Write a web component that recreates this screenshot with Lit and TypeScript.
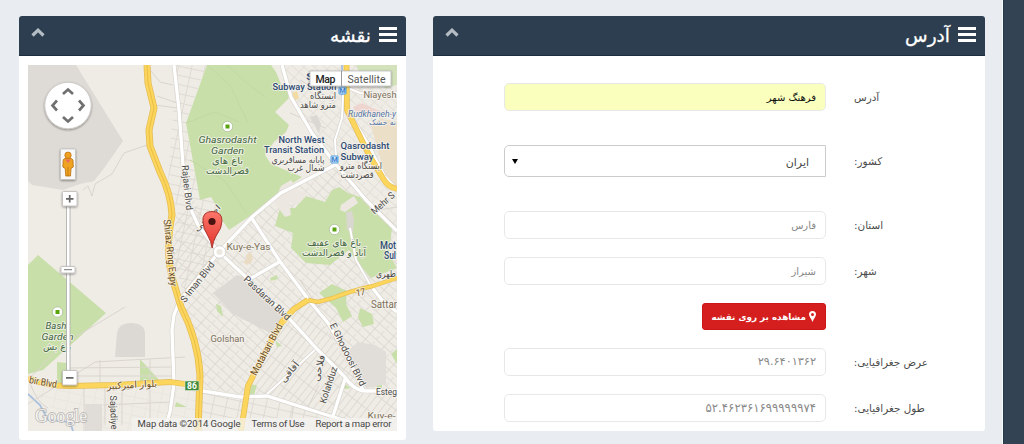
import { LitElement, html, svg, css } from "lit";
import { customElement } from "lit/decorators.js";

type Label = {
  x: number; y: number; s: string; w: number; size?: number; fill?: string;
  r?: number; italic?: boolean; bold?: boolean; fa?: boolean;
};

const BLUE = "#2d4a74";
const GREEN = "#42653f";
const TAN = "#7d705a";
const ROAD = "#6b4a1c";
const INK = "#4c4a47";

const labels: Label[] = [
  { x: 329, y: 80, s: "Shahed", w: 46, fill: BLUE, bold: true },
  { x: 304.5, y: 90, s: "Subway Station", w: 64, fill: BLUE, bold: true },
  { x: 323, y: 99, s: "ایستگاه", w: 26, fa: true },
  { x: 318, y: 108, s: "مترو شاهد", w: 36, fa: true },
  { x: 380, y: 98, s: "Niayesh", w: 33, fill: TAN },
  { x: 372, y: 117, s: "Rudkhaneh-y", w: 48, fill: "#5877a5", italic: true, size: 9 },
  { x: 382.5, y: 125, s: "نه خشک", w: 27, fill: "#5877a5", fa: true, size: 8 },
  { x: 227.5, y: 142.5, s: "Ghasrodasht", w: 58, fill: GREEN, italic: true },
  { x: 227.5, y: 153.5, s: "Garden", w: 33, fill: GREEN, italic: true },
  { x: 227.5, y: 164, s: "باغ های", w: 31, fill: GREEN, fa: true },
  { x: 227.5, y: 174, s: "قصرالدشت", w: 43, fill: GREEN, fa: true },
  { x: 301.5, y: 142.5, s: "North West", w: 46, fill: BLUE, bold: true },
  { x: 294, y: 153, s: "Transit Station", w: 60, fill: BLUE, bold: true },
  { x: 298, y: 162.5, s: "پایانه مسافربری", w: 53, fa: true },
  { x: 306, y: 171, s: "شمال غرب", w: 37, fa: true },
  { x: 365, y: 149, s: "Qasrodasht", w: 49, fill: BLUE, bold: true },
  { x: 357, y: 159.5, s: "Subway", w: 33, fill: BLUE, bold: true },
  { x: 361, y: 169, s: "ایستگاه مترو", w: 42, fa: true },
  { x: 357, y: 178, s: "قصردشت", w: 33, fa: true },
  { x: 385, y: 205.5, s: "Mehr S", w: 28, r: -42, size: 9.5 },
  { x: 184, y: 188, s: "Rajaei Blvd", w: 45, r: 84 },
  { x: 167, y: 253, s: "Shiraz Ring Expy", w: 67, r: 84, fill: ROAD, size: 10 },
  { x: 209, y: 220, s: "اصلاحی", w: 34, r: -45, fa: true, size: 8 },
  { x: 200, y: 284, s: "S Iman Blvd", w: 49, r: -52 },
  { x: 248.5, y: 250, s: "Kuy-e-Yas", w: 44, fill: TAN },
  { x: 265, y: 300.5, s: "Pasdaran Blvd", w: 60, r: 43 },
  { x: 334, y: 245.5, s: "باغ های عفیف", w: 54, fill: GREEN, fa: true },
  { x: 334, y: 255.5, s: "آباد و قصرالدشت", w: 64, fill: GREEN, fa: true },
  { x: 388, y: 248.5, s: "Mot", w: 16, fill: BLUE, bold: true, size: 10 },
  { x: 390, y: 258.5, s: "Sul", w: 12, fill: BLUE, bold: true, size: 10 },
  { x: 386, y: 277, s: "طهری", w: 20, fa: true },
  { x: 361, y: 295.5, s: "17", w: 9, fill: ROAD, r: -8 },
  { x: 384, y: 308, s: "Sattar", w: 26, fill: TAN, size: 10 },
  { x: 227.5, y: 342, s: "Golshan", w: 34, fill: TAN },
  { x: 269.5, y: 351, s: "Motahari Blvd", w: 57, r: -62, fill: ROAD, size: 10 },
  { x: 345, y: 356, s: "E Ghodoosi Blvd", w: 69, r: 63.5 },
  { x: 292, y: 374, s: "آفاقی", w: 24, r: -50, fa: true },
  { x: 322, y: 369, s: "فلاحی", w: 27, r: -76, fa: true },
  { x: 331.5, y: 386, s: "Kolahduz", w: 38, r: -72 },
  { x: 386.5, y: 395, s: "Esteg", w: 21, size: 9.5 },
  { x: 381.5, y: 419, s: "Kuy-e-", w: 28, fill: TAN },
  { x: 56, y: 329, s: "Bash", w: 21, fill: GREEN, italic: true },
  { x: 57.5, y: 340, s: "Garden", w: 32, fill: GREEN, italic: true },
  { x: 57, y: 350, s: "باغ بش", w: 28, fill: GREEN, fa: true },
  { x: 42.5, y: 385.5, s: "bir Blvd", w: 28, r: 10, fill: ROAD, size: 10 },
  { x: 132, y: 388, s: "بلوار امیرکبیر", w: 50, r: -3, fill: ROAD, fa: true },
  { x: 110.500, y: 412.500, s: "Sajadiye", w: 34, r: 88 },
];

const white = [
  "M174 65L179 110L183 165L187 201L198 225L219 252",
  "M219 252L252 217L281 193L335 165",
  "M219 252L246 277L285 314L318 350L344 376Q354 391 366 391L397 391",
  "M251 217L279 260L308 299L328 323L345 352L363 390",
  "M282 65L291 97L312 133L333 161L366 200L397 231",
  "M246 281L281 261",
  "M219 252L180 300L174 315L172 330L174 384L170 412L164 431",
  "M203 391L240 397L267 396L330 416L380 431",
  "M345 379L333 416",
  "M371 286L382 300L397 312",
  "M347 110L368 144L384 176L397 190",
];

const minor = [
  "M265 396L317 348", "M336 156L335 140L342 118L343 95",
  "M350 228L356 260L371 286", "M397 93L375 95L360 93L348 88",
];

const thin = [
  "M28 380L62 345L125 307", "M28 404L95 362L130 360L185 357",
  "M100 360L100 385", "M66 368L175 367", "M66 376L175 376", "M84 386L84 431",
  "M122 388L122 425", "M103 405L172 402", "M150 359L150 418", "M105 386L105 425",
  "M83 190L88 186L92 196L95 184L112 174L124 153L150 144", "M150 70L160 82L173 85",
  "M155 105L177 108", "M157 96L177 103", "M319 385L308 407", "M294 402L290 431",
  "M300 80L325 95", "M290 113L325 128", "M378 210L397 207",
  "M300 280L318 307L350 290", "M30 383Q37 403 48 408",
];

const goldPaths = [
  "M147 65L148 83L154 108L149 130L150 146L160 172Q171 194 172 215Q165 250 172 277L181 307Q198 340 200 375L198 431",
  "M346.500 65L347 110L369 155L384 180Q388 187 397 189",
  "M28 378Q45 386 70 386L115 385L170 382L199 386",
  "M308 300L294 309L282 322L270 343L248 386L241 431",
  "M397 278L373 286Q350 291 333 298L318 302L308 300",
];

@customElement("city-map")
export class CityMap extends LitElement {
  static styles = css`
    :host { display: block; }
    .canvas { display: block; width: 369px; height: 366px; }
    .lat { font-family: Roboto, sans-serif; }
    .fa { font-family: "DejaVu Sans", sans-serif; }
    .logo { font-family: "Liberation Serif", serif; }
  `;

  private label(l: Label) {
    const tr = `rotate(${l.r ?? 0} ${l.x} ${l.y})`;
    return svg`<text class=${l.fa ? "fa" : "lat"} x=${l.x} y=${l.y} transform=${tr}
      text-anchor="middle" font-size=${l.size ?? 9.5} font-weight=${l.bold ? 500 : 400}
      font-style=${l.italic ? "italic" : "normal"} fill=${l.fill ?? INK}
      stroke="#f7f5f0" stroke-opacity=".7" stroke-width="2" paint-order="stroke" stroke-linejoin="round"
      textLength=${l.w} lengthAdjust="spacingAndGlyphs">${l.s}</text>`;
  }

  private park(x: number, y: number) {
    return svg`<circle cx=${x} cy=${y} r="5.2" fill="#fff" stroke="#a9bd98" stroke-width=".8"/>
      <rect x=${x - 2} y=${y - 2} width="4" height="4" fill="#5aa411"/>`;
  }

  private metro(x: number, y: number) {
    return svg`<rect x=${x - 3.5} y=${y - 3.5} width="7" height="7" rx=".5" fill="#d9ebfb" stroke="#4a9be0"/>
      <text class="lat" x=${x} y=${y + 2.6} text-anchor="middle" font-size="7" font-weight="700" fill="#3a80cc">M</text>`;
  }

  render() {
    return html`<svg class="canvas" viewBox="28 65 369 366">
      <defs>
        <pattern id="g1" width="19" height="7" patternUnits="userSpaceOnUse" patternTransform="rotate(42)">
          <path d="M0 .5H19M4.500 0V7M13 3V7" stroke="#dbd6cf" stroke-width=".8" fill="none"/>
        </pattern>
        <pattern id="g2" width="17" height="6" patternUnits="userSpaceOnUse" patternTransform="rotate(-52)">
          <path d="M0 .5H17M5.500 0V6" stroke="#dbd6cf" stroke-width=".8" fill="none"/>
        </pattern>
        <pattern id="g3" width="13" height="9" patternUnits="userSpaceOnUse" patternTransform="rotate(12)">
          <path d="M0 .5H13M6.500 0V9" stroke="#dbd6cf" stroke-width=".8" fill="none"/>
        </pattern>
        <linearGradient id="pin" x1="0" y1="0" x2="0" y2="1">
          <stop offset="0" stop-color="#fc766b"/><stop offset="1" stop-color="#e3352c"/>
        </linearGradient>
        <filter id="sh" x="-20%" y="-20%" width="140%" height="150%">
          <feDropShadow dx="0" dy="1" stdDeviation="1" flood-opacity=".4"/>
        </filter>
      </defs>
      <rect x="28" y="65" width="369" height="366" fill="#efece6"/>
      <path d="M28 65H76L123 141L105 167L94 181L80 184L63 190L32 185L28 181Z" fill="#dedad5"/>
      <path d="M176 65H207L186 122L198 190L216 198L219 252L185 290L172 262L178 212L168 180Z" fill="url(#g3)"/>
      <path d="M219 252L185 295L172 262L176 215L195 200Z" fill="url(#g2)"/>
      <path d="M182 300L219 252L285 314L244 395L202 388L198 350Z" fill="url(#g1)"/>
      <path d="M202 390L265 396L380 430H200Z" fill="url(#g3)"/>
      <path d="M28 388H199V431H80Z" fill="url(#g3)" opacity=".35"/>
      <path d="M252 217L308 299L285 314L219 252Z" fill="url(#g1)"/>
      <path d="M285 314L308 300L363 389L397 391V431L248 393Z" fill="url(#g2)"/>
      <path d="M308 300L371 286L397 278V391H363Z" fill="url(#g1)"/>
      <path d="M283 65H397V231L366 200L333 161L291 102Z" fill="url(#g1)" opacity=".7"/>
      <path d="M252 217L333 163L397 231V278L308 299Z" fill="url(#g1)"/>
      <path d="M371 126L380 118L397 122V187L386 178Z" fill="#ecdfc8"/>
      <path d="M353 107L362 103L370 107L383 112L374 116L356 113Z" fill="#efd5d0"/>
      <path d="M356 65H397V85L385 88L378 74L362 78Z" fill="#d3e2ba"/>
      <path d="M290 94L297 91L299 98L292 103Z" fill="#f2dca3"/>
      <path d="M310 117L317 115L321 124L319 134Z" fill="#dbd8d3"/>
      <path d="M207 65H271L276 72L281 84L288 92L289 98L275 112L289 125L286 132L274 142L265 155L271 164L302 177L278 193L250 216L229 230L222 220L217 207L211 197L200 200L186 123Z" fill="#c9dfaa"/>
      <path d="M207 65L230 85L248 123M227 65L241 78L265 97M186 123L215 112L239 122M190 160L225 181L247 214" fill="none" stroke="#bfd7a0" stroke-width=".8"/>
      <path d="M339 187L348 193L360 197L373 211L392 228L389 254L397 268L371 278L357 262L349 250L330 265L306 263L291 248L293 233L275 226L280 208L295 208L306 196L325 202L332 190Z" fill="#c9dfaa"/>
      <path d="M281 186L291 180L298 190L309 193L297 205L289 202L291 215L285 217L274 202ZM341 205L354 196L358 203L345 212L340 210Z" fill="#ece8e1"/>
      <path d="M319 293L332 284L347 291L346 304L352 316L343 322L336 308ZM360 308L372 314L374 324L363 327L358 318Z" fill="#c9dfaa"/>
      <path d="M270 278L277 275L278 279L271 281ZM275 340L282 346L277 347ZM251 385L257 385L254 395L249 394ZM343 383L351 388L345 389ZM391 354L397 349V364ZM377 382L382 380V388H377ZM216 304L221 306L223 317L217 311Z" fill="#c9dfaa"/>
      <path d="M28 265L38 255L106 313L65 350L43 370L28 374Z" fill="#c9dfaa"/>
      <path d="M57 362L67 363V384H57ZM140 359L160 381L140 382ZM176 402L187 407L175 407Z" fill="#c9dfaa"/>
      <path d="M213 293L237 275L244 277L285 316L277 327L270 333L233 314Z" fill="#ddd9d4"/>
      <path d="M349 350L358 342L375 345L386 352V384L367 388L353 372Z" fill="#e1ddd8"/>
      <path d="M115 357L117 333Q119 323 130 323Q145 323 145 334V357Z" fill="#dcd8d3"/>
      <path d="M85 404H102V431H85Z" fill="#e0dcd7"/>
      <path d="M346 212L352 211L354 220L353 232L347 230Z" fill="#d9d7d0"/>
      <path d="M246 255L251 252L253 260L247 262ZM243 262L249 257L252 262L247 265Z" fill="#eadcc3"/>
      <path d="M28 394L40 405L48 420L70 422L73 431M342 65L342 95L351 121L369 153L377 170" fill="none" stroke="#a9c0df" stroke-width="1.800"/>
      ${thin.map((d) => svg`<path d=${d} fill="none" stroke="#dad5ce"/>`)}
      ${minor.map((d) => svg`<path d=${d} fill="none" stroke="#d8d4ce" stroke-width="3.200"/>`)}
      ${minor.map((d) => svg`<path d=${d} fill="none" stroke="#fff" stroke-width="2"/>`)}
      ${white.map((d) => svg`<path d=${d} fill="none" stroke="#d8d4ce" stroke-width="4.600"/>`)}
      ${white.map((d) => svg`<path d=${d} fill="none" stroke="#fff" stroke-width="3.300"/>`)}
      ${goldPaths.map((d, i) => svg`<path d=${d} fill="none" stroke="#e5bd55" stroke-width=${i === 4 ? 4.4 : i === 0 ? 7 : 5.8}/>`)}
      ${goldPaths.map((d, i) => svg`<path d=${d} fill="none" stroke="#fcd65c" stroke-width=${i === 4 ? 3.1 : i === 0 ? 5.4 : 4.4}/>`)}
      <path d=${goldPaths[0]} fill="none" stroke="#e5b640" stroke-width=".8"/>
      <path d="M281 319L290 310L287 322L279 326Z" fill="#fcd65c"/>
      <circle cx="219.500" cy="252" r="4.500" fill="#ebe7e1" stroke="#fff" stroke-width="3"/>
      <circle cx="219.500" cy="252" r="6.300" fill="none" stroke="#d1cdc7" stroke-width=".7"/>
      ${labels.map((l) => this.label(l))}
      ${this.park(227.5, 126.500)} ${this.park(334.500, 229.500)} ${this.park(57.500, 312)}
      ${this.metro(342.500, 90.500)} ${this.metro(334.500, 159.500)}
      <rect x="185" y="381" width="14" height="9.500" fill="#3f8a3c" stroke="#dfead4" stroke-width=".6"/>
      <text class="lat" x="192" y="389" text-anchor="middle" font-size="8.500" font-weight="700" fill="#fff">86</text>

      <path d="M203 222Q202 211.500 212 211.500Q222 211.500 222 221Q222 228 216 236Q213 241 212.200 248Q211 241 208 236Q203 228 203 222Z" fill="url(#pin)" stroke="#a9352c"/>
      <circle cx="212" cy="221.500" r="3.600" fill="#4a1210"/>

      <circle cx="68" cy="105.500" r="23.200" fill="#fff" stroke="#c8c5c1" stroke-width=".8" filter="url(#sh)"/>
      <g fill="none" stroke="#707070" stroke-width="2.700">
        <path d="M63 94L68 89.500L73 94"/><path d="M63 117L68 121.500L73 117"/>
        <path d="M57 100.500L52.500 105.500L57 110.500"/><path d="M79 100.500L83.500 105.500L79 110.500"/>
      </g>
      <rect x="60.500" y="149" width="15" height="30.500" rx="1" fill="#f8f8f8" stroke="#bbb" stroke-width=".7" filter="url(#sh)"/>
      <path d="M63.200 160Q63.500 158 68 158Q72.500 158 73 160L73.300 167L71 168.500L70.500 176H65.800L65.200 168.500L62.800 167Z" fill="#f0a321" stroke="#b66f10" stroke-width=".8"/>
      <path d="M65 159.500H71L68 163Z" fill="#e96b5e"/><path d="M68 167V176" stroke="#b66f10" stroke-width=".7"/>
      <circle cx="68" cy="155.200" r="3.200" fill="#efa01f" stroke="#b66f10" stroke-width=".7"/>
      <rect x="66.500" y="206" width="3.500" height="165" fill="#fff" stroke="#aaa" stroke-width=".8"/>
      <g fill="#fff" stroke="#bdbab6" stroke-width=".8" filter="url(#sh)">
        <rect x="62.500" y="191.500" width="14.500" height="14.500" rx="1"/>
        <rect x="61" y="266.500" width="14" height="6.500" rx="1"/>
        <rect x="62.500" y="370.500" width="14.500" height="14.500" rx="1"/>
      </g>
      <path d="M66 198.800H73.500M69.700 195V202.500M66 377.800H73.500" stroke="#666" stroke-width="1.700"/>
      <path d="M64 269.700H72" stroke="#777"/>

      <g filter="url(#sh)"><rect x="310" y="71" width="81" height="15" fill="#fff" stroke="#bbb" stroke-width=".8"/></g>
      <path d="M341.500 71V86" stroke="#999"/>
      <text class="lat" x="315.500" y="83" font-size="10.500" font-weight="500" fill="#222" textLength="20">Map</text>
      <text class="lat" x="347.500" y="83" font-size="10.500" fill="#555" textLength="38">Satellite</text>

      <rect x="132" y="418" width="265" height="13" fill="#f4f3f0" opacity=".75"/>
      <g class="lat" font-size="9.500" fill="#444">
        <text x="137.500" y="427.300" textLength="103">Map data ©2014 Google</text>
        <text x="251.500" y="427.300" textLength="53">Terms of Use</text>
        <text x="315.500" y="427.300" textLength="76">Report a map error</text>
      </g>
      <text class="logo" x="35" y="422" font-size="19" fill="#f4f3f1" stroke="#b5b2ae" stroke-width="1.400" paint-order="stroke" textLength="52" lengthAdjust="spacingAndGlyphs">Google</text>
    </svg>`;
  }
}

@customElement("app-root")
export class AppRoot extends LitElement {
  static styles = css`
    * { box-sizing: border-box; }
    :host {
      display: flex; width: 1024px; height: 444px; overflow: hidden;
      background: #e9edf2; font-family: "DejaVu Sans", sans-serif; color: #444;
    }
    .main { flex: 1; display: flex; align-items: flex-start; gap: 27px; padding: 16px 0 0 19px; border-right: 1px solid #fbfcfd; }
    .side { width: 21px; background: #334354; border-left: 1px solid #25394c; }
    .panel { background: #fff; border-radius: 3px; overflow: hidden; }
    .map { width: 387px; height: 424px; }
    .address { width: 552px; height: 415px; }
    .head {
      direction: rtl; height: 40px; padding: 0 9px 0 12px; display: flex; align-items: center;
      background: #2d3e50; border-bottom: 1px solid #1c2d40; color: #fff;
    }
    .bars { width: 18px; height: 15px; display: flex; flex-direction: column; justify-content: space-between; margin-bottom: 3px; }
    .bars i { height: 3px; background: #fff; }
    .title { font-size: 18.500px; font-weight: 400; margin: 0 8px 0 auto; line-height: 38px; -webkit-text-stroke: .3px #fff; }
    .chev { display: block; width: 14px; height: 9px; margin-bottom: 6px; }
    .map-body { padding: 9px; }
    .form { direction: rtl; padding-top: 27px; padding-right: 57px; display: flex; flex-direction: column; gap: 18px; }
    .row { display: flex; align-items: center; height: 28px; font-size: 11px; }
    .row.first { height: 28px; margin-bottom: 16px; }
    .row.tall { height: 32px; margin-bottom: 16px; }
    .row.near { margin-bottom: -1px; align-items: flex-start; }
    .label { width: 74px; text-align: left; margin-left: 28px; white-space: nowrap; color: #4b4b4b; font-size: 10.400px; }
    .field { width: 322px; height: 28px; border: 1.500px solid #e8e8e8; border-radius: 5px; padding: 0 9px; line-height: 27px; color: #888; font-size: 10px; }
    .lit { background: #faffbd; color: #111; }
    .pick { height: 32px; border: 1px solid #ccc; border-radius: 5px 0 0 5px; display: flex; align-items: center; justify-content: space-between; padding: 0 16px 0 7px; color: #444; font-size: 11px; line-height: 30px; }
    .pick span { padding-top: 4px; line-height: 26px; }
    .tri { width: 0; height: 0; border: 3px solid transparent; border-top: 5px solid #000; border-bottom: 0; }
    .num { font-size: 11.300px; line-height: 26px; }
    .wide { font-size: 11.700px; line-height: 26px; }
    .btn { height: 27px; width: 124px; background: #d51f1f; border: 1px solid #cb1717; border-radius: 3px; color: #fff; display: flex; align-items: center; gap: 3px; padding: 0 9px; font-size: 8.800px; white-space: nowrap; font-weight: 700; }
    .pin { width: 7px; height: 11px; flex: none; }
  `;

  private head(title: string) {
    return html`<div class="head">
      <span class="bars"><i></i><i></i><i></i></span>
      <h2 class="title">${title}</h2>
      <svg class="chev" viewBox="0 0 14 9"><path d="M1.500 7.500L7 2.200L12.500 7.500" fill="none" stroke="#b4bcc4" stroke-width="3.200"/></svg>
    </div>`;
  }

  private row(label: string, value: string, field = "", row = "") {
    return html`<div class="row ${row}"><span class="label">${label}</span><div class="field ${field}">${value}</div></div>`;
  }

  render() {
    return html`
      <main class="main">
        <section class="panel map">${this.head("نقشه")}<div class="map-body"><city-map></city-map></div></section>
        <section class="panel address">${this.head("آدرس")}
          <div class="form">
            ${this.row("آدرس", "فرهنگ شهر", "lit", "first")}
            <div class="row tall"><span class="label">کشور:</span>
              <div class="field pick"><span>ایران</span><i class="tri"></i></div></div>
            ${this.row("استان:", "فارس")}
            ${this.row("شهر:", "شیراز")}
            <div class="row near"><span class="label"></span>
              <div class="btn"><svg class="pin" viewBox="0 0 7 11"><path fill-rule="evenodd" d="M3.500 0A3.500 3.500 0 0 1 7 3.500C7 5.500 4.500 8 3.500 11C2.500 8 0 5.500 0 3.500A3.500 3.500 0 0 1 3.500 0ZM3.500 2A1.500 1.500 0 1 0 3.500 5A1.500 1.500 0 1 0 3.500 2Z" fill="#fff"/></svg><span>مشاهده بر روی نقشه</span></div></div>
            ${this.row("عرض جغرافیایی:", "۲۹.۶۴۰۱۳۶۲", "num")}
            ${this.row("طول جغرافیایی:", "۵۲.۴۶۲۳۶۱۶۹۹۹۹۹۹۷۴", "wide")}
          </div>
        </section>
      </main>
      <aside class="side"></aside>`;
  }
}
